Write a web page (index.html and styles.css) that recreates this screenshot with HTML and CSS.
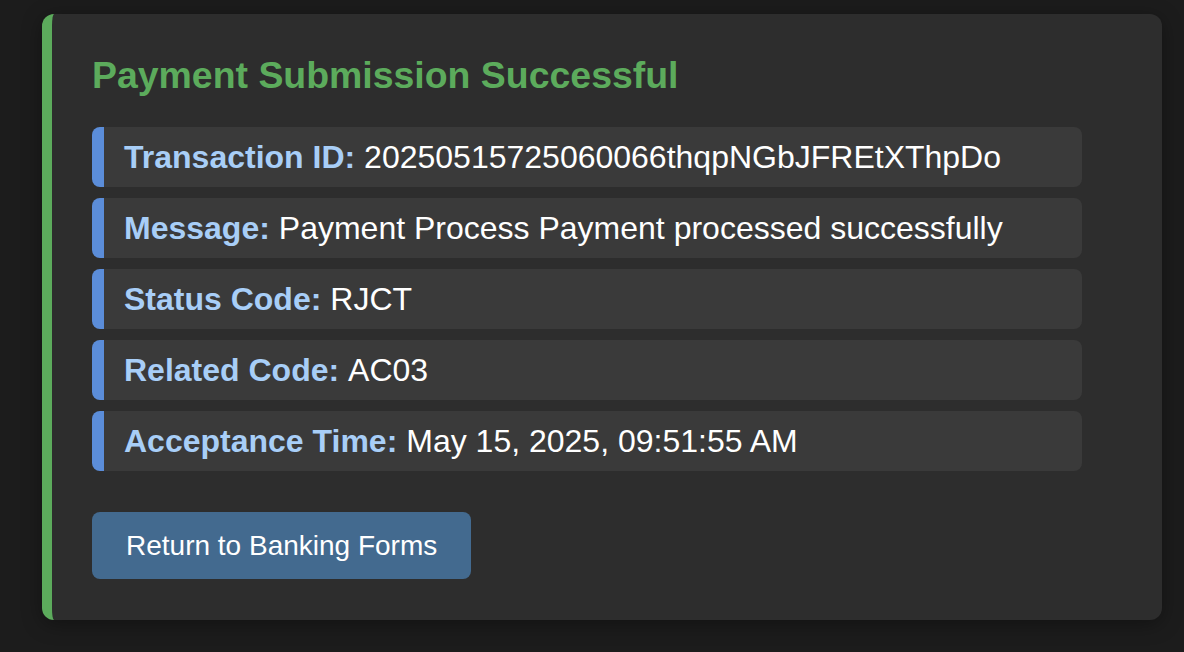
FILE: index.html
```html
<!DOCTYPE html>
<html lang="en">
<head>
<meta charset="utf-8">
<title>Payment Submission Successful</title>
<link rel="stylesheet" href="styles.css">
</head>
<body>
<div class="page">
  <section class="card">
    <h3 class="title">Payment Submission Successful</h3>
    <div class="details">
      <div class="row"><span class="label">Transaction ID:</span> 20250515725060066thqpNGbJFREtXThpDo</div>
      <div class="row"><span class="label">Message:</span> Payment Process Payment processed successfully</div>
      <div class="row"><span class="label">Status Code:</span> RJCT</div>
      <div class="row"><span class="label">Related Code:</span> AC03</div>
      <div class="row"><span class="label">Acceptance Time:</span> May 15, 2025, 09:51:55 AM</div>
    </div>
    <button class="btn" type="button">Return to Banking Forms</button>
  </section>
</div>
</body>
</html>
```

FILE: styles.css
```css
html, body {
  margin: 0;
  padding: 0;
  background: #1c1c1c;
  font-family: "Liberation Sans", Arial, sans-serif;
}

.page {
  height: 652px;
  box-sizing: border-box;
  padding: 14px 22px 0 42px;
  border-left: 3px solid #222222;
  margin-left: -3px;
}

.card {
  width: 1120px;
  box-sizing: border-box;
  background: #2d2d2d;
  border-left: 10px solid #5cab5c;
  border-radius: 12px;
  padding: 40px 40px 41px 40px;
  box-shadow: 0 4px 20px rgba(0, 0, 0, 0.35);
  display: flex;
  flex-direction: column;
  align-items: flex-start;
}

.title {
  margin: 0 0 31px 0;
  font-size: 37.44px;
  font-weight: bold;
  color: #5cab5c;
  line-height: 42px;
}

.details {
  width: 990px;
  display: flex;
  flex-direction: column;
  gap: 11px;
}

.row {
  box-sizing: border-box;
  height: 60px;
  display: flex;
  align-items: center;
  gap: 0.28em;
  background: #3a3a3a;
  border-left: 12px solid #5b8dd9;
  border-radius: 8px;
  padding: 0 20px;
  font-size: 32px;
  color: #ffffff;
  white-space: nowrap;
}

.label {
  font-weight: bold;
  color: #a8cef7;
}

.btn {
  margin-top: 41px;
  height: 67px;
  padding: 0 34px;
  border: none;
  border-radius: 8px;
  background: #436a8f;
  color: #ffffff;
  font-family: "Liberation Sans", Arial, sans-serif;
  font-size: 28px;
  line-height: 32px;
  cursor: pointer;
}
```
